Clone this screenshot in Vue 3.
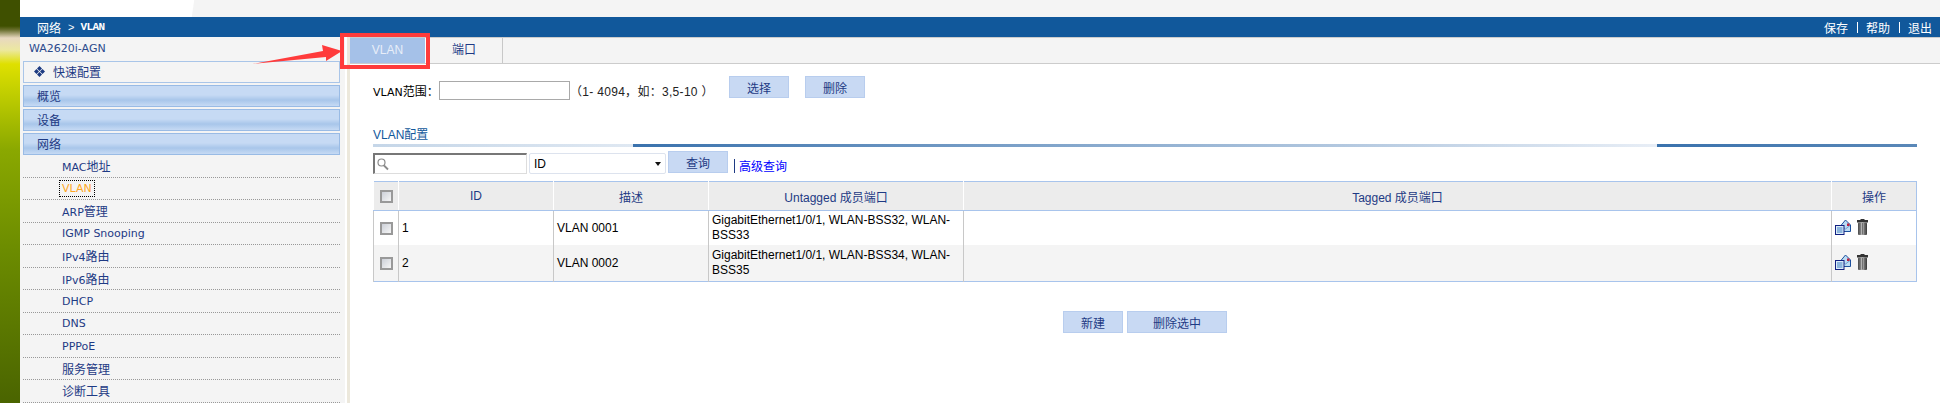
<script setup>
const navGroups = ['概览', '设备', '网络']

const subItems = [
    { lat: 'MAC', zh: '地址' },
    { lat: 'VLAN', zh: '', active: true },
    { lat: 'ARP', zh: '管理' },
    { lat: 'IGMP Snooping', zh: '' },
    { lat: 'IPv4', zh: '路由' },
    { lat: 'IPv6', zh: '路由' },
    { lat: 'DHCP', zh: '' },
    { lat: 'DNS', zh: '' },
    { lat: 'PPPoE', zh: '' },
    { lat: '', zh: '服务管理' },
    { lat: '', zh: '诊断工具' }
]

const vlans = [
    { id: 1, desc: 'VLAN 0001', untagged: 'GigabitEthernet1/0/1, WLAN-BSS32, WLAN-BSS33' },
    { id: 2, desc: 'VLAN 0002', untagged: 'GigabitEthernet1/0/1, WLAN-BSS34, WLAN-BSS35' }
]
</script>

<template>
    <div class="page">
        <div class="strip"></div>
        <div class="main">
            <div class="top"></div>
            <div class="header">
                <div class="crumb"><span>网络</span><span class="sep">&gt;</span><span class="crumb-cur">VLAN</span></div>
                <div class="actions"><span>保存</span><i></i><span>帮助</span><i></i><span>退出</span></div>
            </div>
            <div class="body">
                <aside class="sidebar">
                    <div class="device">WA2620i-AGN</div>
                    <div class="quick">
                        <svg width="11" height="11" viewBox="0 0 11 11">
                            <path d="M5.5 0 8 2.5 5.5 5 3 2.5zM2.5 3 5 5.5 2.5 8 0 5.5zM8.5 3 11 5.5 8.5 8 6 5.5zM5.5 6 8 8.5 5.5 11 3 8.5z" fill="#1d3b82" />
                        </svg>
                        <span>快速配置</span>
                    </div>
                    <div v-for="g in navGroups" :key="g" class="group">{{ g }}</div>
                    <ul class="sub">
                        <li v-for="s in subItems" :key="s.lat + s.zh">
                            <span :class="{ cur: s.active }"><span class="lat">{{ s.lat }}</span><span class="zh">{{ s.zh }}</span></span>
                        </li>
                    </ul>
                </aside>
                <div class="splitter"></div>
                <section class="content">
                    <div class="tabs">
                        <div class="tab on">VLAN</div>
                        <div class="tab">端口</div>
                    </div>
                    <div class="panel">
                        <div class="range">
                            <div class="range-field">
                                <span class="lbl"><span class="lat">VLAN</span><span class="zh">范围：</span></span>
                                <input class="range-input" type="text" />
                                <span class="hint">（1- 4094，如：3,5-10 ）</span>
                            </div>
                            <button class="btn pick">选择</button>
                            <button class="btn">删除</button>
                        </div>
                        <div class="sec-title">VLAN配置</div>
                        <div class="sec-bar"><i class="b1"></i><i class="b2"></i><i class="b3"></i></div>
                        <div class="query">
                            <div class="search">
                                <svg width="14" height="14" viewBox="0 0 14 14" fill="none" stroke="#8a8a8a">
                                    <circle cx="5.5" cy="5.5" r="3.5" stroke-width="1.2" />
                                    <path d="M8 8.5 12 12.5" stroke-width="1.8" />
                                </svg>
                            </div>
                            <div class="select"><span>ID</span><i class="caret"></i></div>
                            <button class="btn qbtn">查询</button>
                            <i class="bar"></i>
                            <a class="adv">高级查询</a>
                        </div>
                        <table class="grid">
                            <colgroup>
                                <col class="c-check" /><col class="c-id" /><col class="c-id" />
                                <col class="c-untag" /><col /><col class="c-op" />
                            </colgroup>
                            <thead>
                                <tr>
                                    <th><span class="check"></span></th>
                                    <th>ID</th>
                                    <th>描述</th>
                                    <th>Untagged 成员端口</th>
                                    <th>Tagged 成员端口</th>
                                    <th>操作</th>
                                </tr>
                            </thead>
                            <tbody>
                                <tr v-for="v in vlans" :key="v.id">
                                    <td class="ctr"><span class="check"></span></td>
                                    <td>{{ v.id }}</td>
                                    <td>{{ v.desc }}</td>
                                    <td>{{ v.untagged }}</td>
                                    <td></td>
                                    <td class="ops">
                                        <svg width="16" height="16" viewBox="0 0 16 16">
                                            <path d="M5.5 7 10.500 1 15.500 6v6.500h-10z" fill="#bcdcf4" stroke="#1c4f9c" />
                                            <path d="M6 6.500 10.500 10l4.500-3.500" fill="none" stroke="#6c9cd0" />
                                            <rect x="12" y="4.500" width="2.500" height="2.500" fill="#c02040" />
                                            <rect x=".5" y="6.500" width="8.500" height="9" fill="#dcecf8" stroke="#101f80" />
                                            <path d="M2 9h5.500M2 11h5.500M2 13h5.500" stroke="#3c7cc0" />
                                        </svg>
                                        <svg width="11" height="16" viewBox="0 0 11 16">
                                            <defs>
                                                <linearGradient id="can" x1="0" x2="1" y1="0" y2="0">
                                                    <stop offset="0" stop-color="#444" />
                                                    <stop offset=".45" stop-color="#c4c4c4" />
                                                    <stop offset="1" stop-color="#333" />
                                                </linearGradient>
                                            </defs>
                                            <rect x="3.5" y="0" width="4" height="1" fill="#333" />
                                            <rect x="0" y="1" width="11" height="2.5" fill="#333" />
                                            <rect x="1" y="3.500" width="9" height="12.5" rx="1" fill="url(#can)" />
                                            <path d="M3 4v11.500M5.500 4v11.500M8 4v11.500" stroke="#555" stroke-width=".7" />
                                        </svg>
                                    </td>
                                </tr>
                            </tbody>
                        </table>
                        <div class="foot">
                            <button class="btn">新建</button>
                            <button class="btn wide">删除选中</button>
                        </div>
                    </div>
                </section>
            </div>
        </div>
        <svg class="mark" width="200" height="80" viewBox="240 0 200 80">
            <path d="M252 64 323 51 322 45 342 51 326 61 326 57z" fill="#ff3b3b" />
            <rect x="342" y="35" width="86" height="32" fill="none" stroke="#ff3b3b" stroke-width="4" />
        </svg>
    </div>
</template>

<style>
html, body { margin: 0; background: #fff; }
</style>

<style scoped>
.page {
    position: relative;
    display: flex;
    width: 1940px;
    height: 403px;
    overflow: hidden;
    font-family: "Liberation Sans", "Noto Sans CJK SC", sans-serif;
    font-size: 12px;
    color: #000;
    background: #fff;
}

.strip {
    width: 20px;
    flex: none;
    background: linear-gradient(180deg, #3f5000 0, #3f5000 26px, #6b7030 30px, #e8d8c0 38px, #ece8a0 50px, #dfe000 64px, #c4d000 90px, #8aa800 150px, #6c8c00 250px, #4a6400 403px);
}

.main {
    flex: 1;
    min-width: 0;
    display: flex;
    flex-direction: column;
}

.top {
    height: 17px;
    flex: none;
    background: linear-gradient(98deg, #fff 172px, #f4f4f4 173px);
}

.header {
    height: 20px;
    flex: none;
    display: flex;
    align-items: center;
    justify-content: space-between;
    padding: 0 8px 0 17px;
    background: #11589b;
    color: #fff;
}

.crumb {
    display: flex;
    align-items: center;
}

.sep {
    margin: 0 6px 0 7px;
    font-size: 11px;
}

.crumb-cur {
    font-family: "Liberation Mono", monospace;
    font-weight: bold;
    font-size: 11px;
    letter-spacing: -0.6px;
}

.actions {
    display: flex;
    align-items: center;
}

.actions i {
    width: 1px;
    height: 11px;
    margin: 0 8px 0 9px;
    background: #fff;
}

.body {
    flex: 1;
    min-height: 0;
    display: flex;
}

.sidebar {
    width: 325px;
    flex: none;
    box-sizing: border-box;
    padding: 0 5px 0 3px;
    background: #f4f4f4;
    color: #1e3a84;
}

.device {
    height: 24px;
    line-height: 23px;
    padding-left: 6px;
    font-family: "DejaVu Sans", sans-serif;
    font-size: 11px;
    color: #2b4a8c;
}

.quick {
    box-sizing: border-box;
    height: 22px;
    display: flex;
    align-items: center;
    gap: 8px;
    padding: 0 0 1px 10px;
    margin-bottom: 2px;
    border: 1px solid #a9c5e8;
}

.group {
    box-sizing: border-box;
    height: 22px;
    line-height: 22px;
    padding-left: 13px;
    margin-bottom: 2px;
    border: 1px solid #99bbe5;
    background: linear-gradient(180deg, #c6daf4 0, #c6daf4 45%, #a8c6ea 70%, #c6daf4 100%);
}

.group:last-of-type {
    margin-bottom: 0;
}

.sub {
    list-style: none;
    margin: 0;
    padding: 0;
}

.sub li {
    box-sizing: border-box;
    height: 22.5px;
    display: flex;
    align-items: center;
    padding-left: 39px;
    border-bottom: 1px dotted #999;
}

.lat {
    font-family: "DejaVu Sans", sans-serif;
    font-size: 11px;
}

.zh {
    font-size: 12px;
}

.cur {
    margin-left: -3px;
    padding: 0 2px;
    line-height: 14px;
    border: 1px dotted #000;
    color: #ffa726;
}

.splitter {
    box-sizing: border-box;
    width: 5px;
    flex: none;
    border-left: 2px solid #fff;
    background: #ece8dc;
}

.content {
    flex: 1;
    min-width: 0;
}

.tabs {
    box-sizing: border-box;
    height: 27px;
    display: flex;
    border-top: 1px solid #ccc;
    border-bottom: 1px solid #ccc;
    background: #f4f4f4;
}

.tab {
    box-sizing: border-box;
    width: 77px;
    line-height: 25px;
    text-align: center;
    color: #1e3a84;
    border-right: 1px solid #c8c8c8;
}

.tab.on {
    width: 76px;
    border-right: 1px solid #fff;
    background: #a5c1e8;
    color: #e8eef8;
}

.panel {
    padding: 12px 23px 0;
}

.range {
    height: 22px;
    display: flex;
    align-items: flex-start;
}

.range-field {
    display: flex;
    align-items: center;
    margin-top: 5px;
}

.lbl {
    width: 66px;
    white-space: nowrap;
}

.range-input {
    box-sizing: border-box;
    width: 131px;
    height: 19px;
    padding: 0;
    border: 1px solid #a9a9a9;
    background: #fff;
}

.hint {
    width: 159px;
    box-sizing: border-box;
    white-space: nowrap;
    letter-spacing: 0.3px;
    color: #222;
}

.btn {
    box-sizing: border-box;
    width: 60px;
    height: 22px;
    padding: 0;
    border: 1px solid #b8cdee;
    background: #c8d9f3;
    color: #1e3a84;
    font: inherit;
}

.pick {
    margin-right: 16px;
}

.wide {
    width: 100px;
}

.sec-title {
    margin-top: 29px;
    height: 17px;
    line-height: 17px;
    color: #11589b;
}

.sec-bar {
    display: flex;
    height: 3px;
}

.sec-bar i {
    display: block;
}

.b1 {
    width: 260px;
    background: linear-gradient(90deg, #c5d6e8, #dfe8f2);
}

.b2 {
    width: 1024px;
    background: linear-gradient(90deg, #3a72ad, #e8eef6);
}

.b3 {
    flex: 1;
    background: linear-gradient(90deg, #3a72ad, #5a88b8);
}

.query {
    display: flex;
    align-items: flex-start;
    height: 30px;
    margin-top: 4px;
}

.search {
    box-sizing: border-box;
    width: 154px;
    height: 21px;
    margin: 2px 2px 0 0;
    padding: 2px 0 0 1px;
    border-style: solid;
    border-width: 2px 1px 1px 2px;
    border-color: #777 #ddd #ddd #777;
}

.search svg {
    display: block;
}

.select {
    box-sizing: border-box;
    width: 137px;
    height: 21px;
    margin: 2px 2px 0 0;
    display: flex;
    align-items: center;
    justify-content: space-between;
    padding: 0 4px;
    border: 1px solid #dde3ee;
    border-radius: 2px;
}

.caret {
    width: 0;
    height: 0;
    border-style: solid;
    border-width: 4px 3.5px 0;
    border-color: #111 transparent transparent;
}

.bar {
    width: 1px;
    height: 14px;
    margin: 8px 4px 0 6px;
    background: #1e3a84;
}

.adv {
    margin-top: 8px;
    line-height: 16px;
    color: #00f;
}

.grid {
    width: 100%;
    height: 100px;
    table-layout: fixed;
    border-collapse: collapse;
    border: 1px solid #a8c4ec;
}

.c-check {
    width: 25px;
}

.c-id {
    width: 155px;
}

.c-untag {
    width: 255px;
}

.c-op {
    width: 85px;
}

.grid th {
    height: 28px;
    padding: 0;
    font-weight: normal;
    color: #1e3a84;
    background: #ececec;
    border-left: 1px solid #fff;
    border-bottom: 1px solid #a8c4ec;
}

.grid th:first-child,
.ctr {
    text-align: center;
}

.grid td {
    height: 34px;
    padding: 0 3px;
    line-height: 15px;
    border-left: 1px solid #c8c8c8;
}

.grid tbody tr:nth-child(2) td {
    height: 36px;
    background: #f4f4f4;
}

.grid td.ctr {
    padding: 0;
}

.check {
    display: inline-block;
    box-sizing: border-box;
    width: 13px;
    height: 13px;
    vertical-align: middle;
    border: 2px solid #999;
    background: linear-gradient(135deg, #ccd0d8, #f6f6f6);
}

.ops svg {
    vertical-align: middle;
    margin-bottom: 3px;
}

.ops svg + svg {
    margin-left: 6px;
}

.foot {
    display: flex;
    justify-content: center;
    gap: 4px;
    margin-top: 29px;
}

.mark {
    position: absolute;
    left: 240px;
    top: 0;
}
</style>
